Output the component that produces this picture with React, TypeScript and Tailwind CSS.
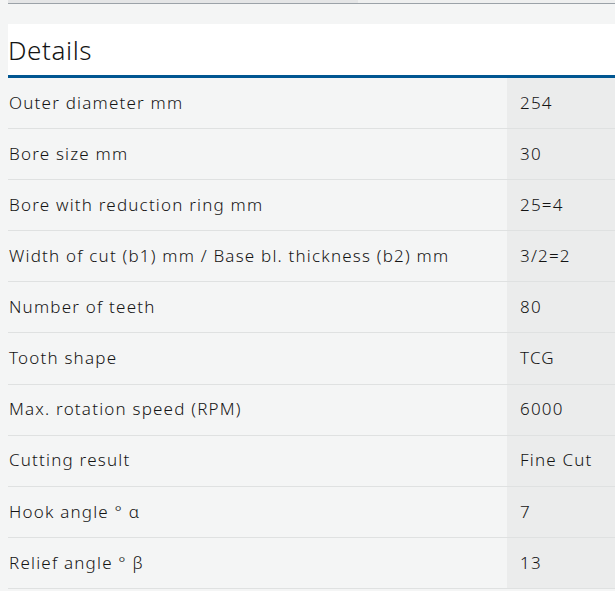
const rows: [string, string][] = [
  ["Outer diameter mm", "254"],
  ["Bore size mm", "30"],
  ["Bore with reduction ring mm", "25=4"],
  ["Width of cut (b1) mm / Base bl. thickness (b2) mm", "3/2=2"],
  ["Number of teeth", "80"],
  ["Tooth shape", "TCG"],
  ["Max. rotation speed (RPM)", "6000"],
  ["Cutting result", "Fine Cut"],
  ["Hook angle ° α", "7"],
  ["Relief angle ° β", "13"],
];

export default function App() {
  return (
    <div className="w-[615px] h-[591px] overflow-hidden bg-[#f4f5f5] pl-2 text-[#141414] font-['Noto_Sans','Liberation_Sans',sans-serif] font-[350]">
      {/* top tab strip */}
      <div className="flex h-[3px]">
        <div className="w-[350px] bg-[#e4e5e6]" />
        <div className="flex-1 bg-[#eeefef]" />
      </div>
      <div className="h-px bg-[#9ba2a8]" />

      <div className="mt-5 h-[51px] bg-white flex items-center border-b-[3px] border-[#005691] box-content">
        <h2 className="text-[26px] leading-none tracking-[0.6px]">Details</h2>
      </div>

      <div>
        {rows.map(([label, value]) => (
          <div key={label} className="flex h-[51.1px] border-b border-[#dfe1e1]">
            <div className="flex-1 flex items-center pl-px pb-px text-[17px] tracking-[1.2px]">{label}</div>
            <div className="w-[108px] flex items-center pl-[13px] pb-px bg-[#ebecec] text-[17px] tracking-[1.2px]">{value}</div>
          </div>
        ))}
      </div>
    </div>
  );
}
